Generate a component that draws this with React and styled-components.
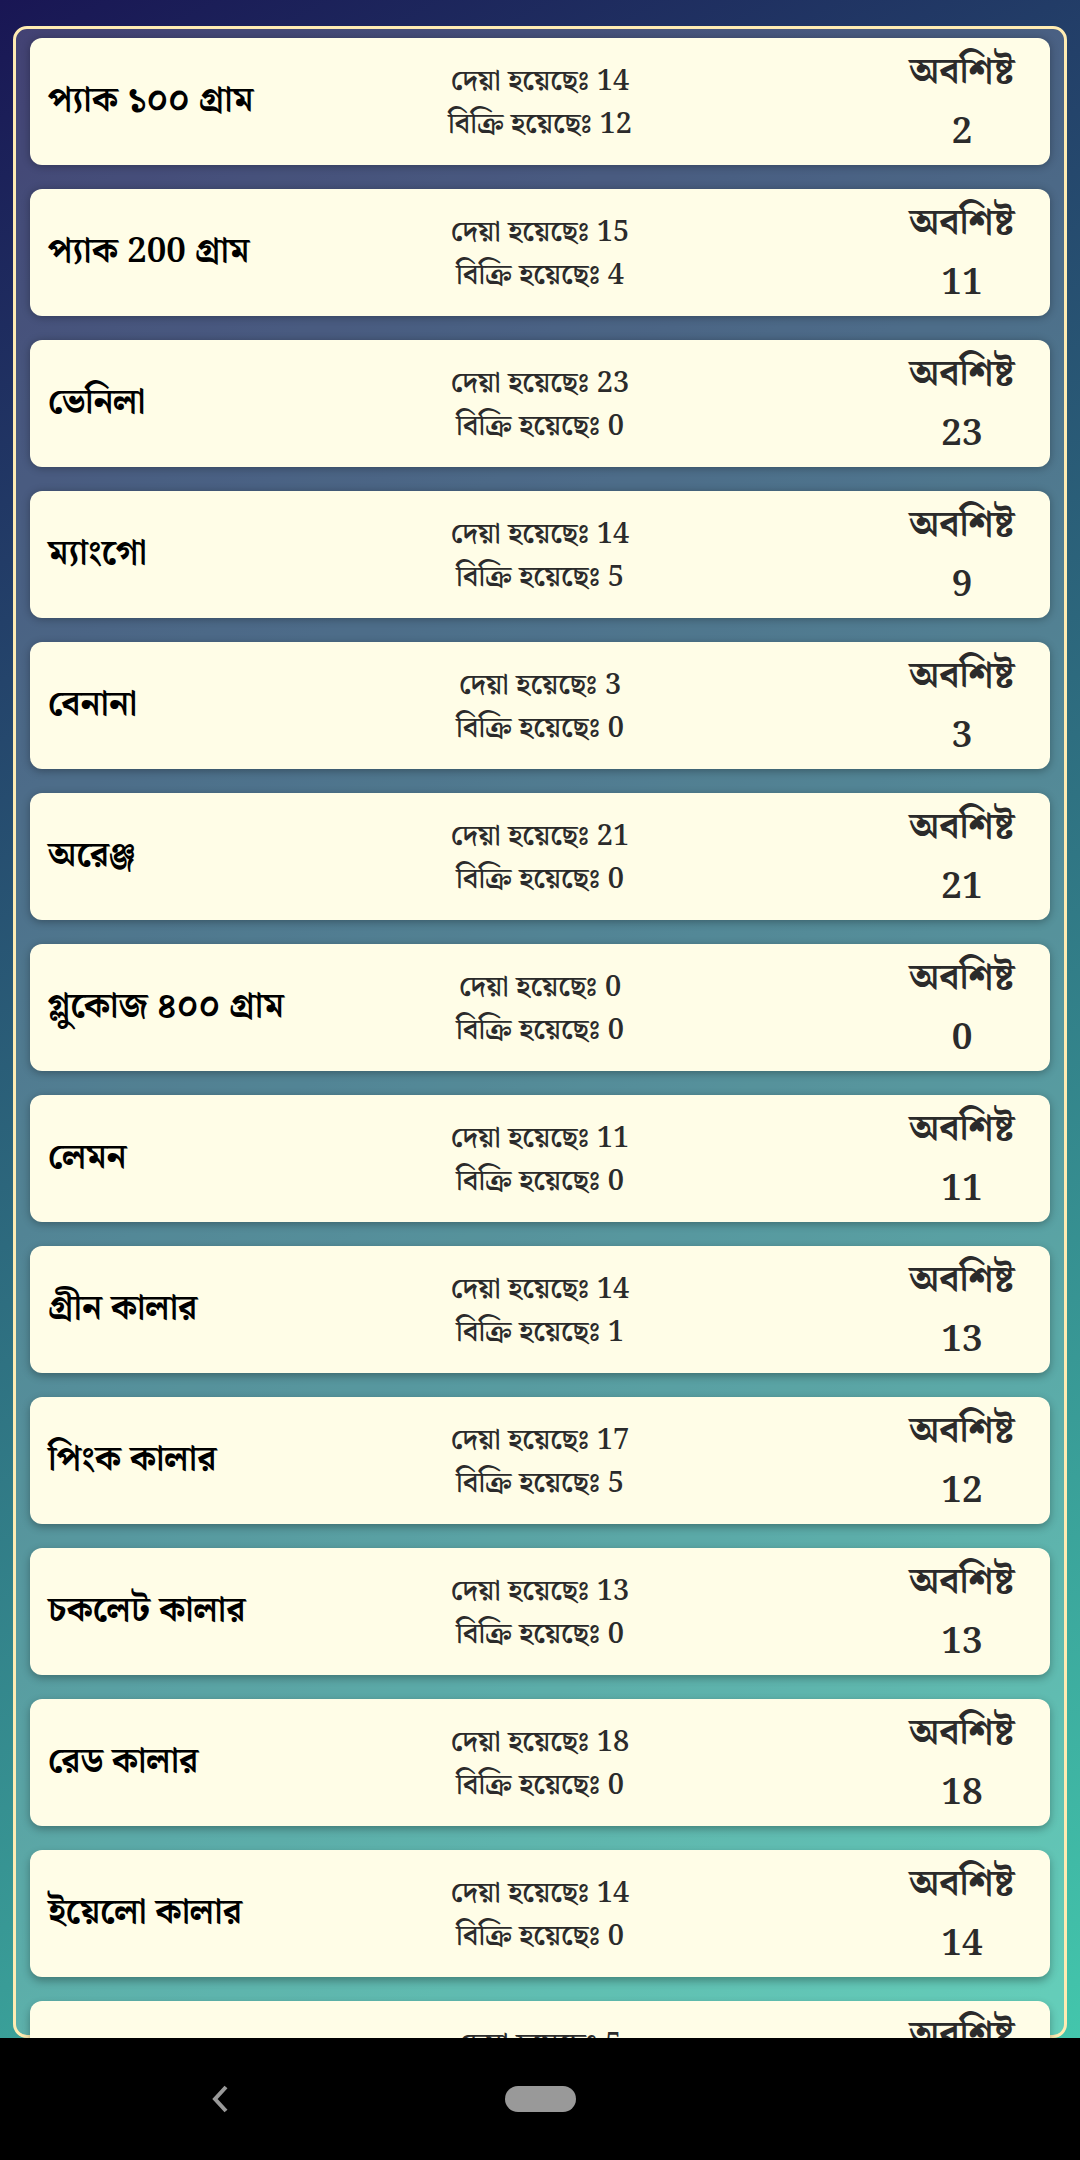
import React from "react";
import styled, { createGlobalStyle } from "styled-components";

const GlobalStyle = createGlobalStyle`
  * { box-sizing: border-box; }
  body {
    margin: 0;
    background: #000;
    font-family: "Noto Serif Bengali", "Noto Serif", "Liberation Serif", "Noto Sans Bengali", serif;
  }
`;

const Shell = styled.div`
  height: 100vh;
  display: flex;
  flex-direction: column;
`;

const Screen = styled.main`
  flex: 1;
  min-height: 0;
  overflow: hidden;
  padding: 26px 13px 0;
  background: linear-gradient(152deg, #191654, #43c6ac);
`;

const Frame = styled.section`
  height: 100%;
  padding: 9px 14px;
  border: 3px solid #ffecb3;
  border-radius: 14px;
  background: rgba(255, 255, 255, 0.18);
`;

const List = styled.ul`
  list-style: none;
  margin: 0;
  padding: 0;
  display: flex;
  flex-direction: column;
  gap: 24px;
`;

const Card = styled.li`
  display: grid;
  grid-template-columns: 1fr auto 1fr;
  align-items: start;
  min-height: 127px;
  padding: 0 18px;
  border-radius: 12px;
  background: #fffde7;
  color: #2b2b2b;
  box-shadow: 0 ${(p) => p.$lift}px 8px rgba(0, 0, 0, 0.3);
`;

const Name = styled.h2`
  grid-column: 1;
  margin: 0;
  padding-top: 37px;
  color: #000;
  font-size: 35px;
  line-height: 52px;
  font-weight: 700;
`;

const Counts = styled.div`
  grid-column: 2;
  padding-top: 22px;
  text-align: center;
  font-size: 29px;
  line-height: 43px;
  font-weight: 600;
`;

const Count = styled.div`
  white-space: nowrap;
`;

const Remaining = styled.div`
  grid-column: 3;
  justify-self: end;
  min-width: 140px;
  padding-top: 5px;
  text-align: center;
  font-size: 37px;
  line-height: 60px;
  font-weight: 700;
`;

const NavBar = styled.nav`
  flex: none;
  height: 122px;
  display: grid;
  grid-template-columns: 1fr auto 1fr;
  gap: 64px;
  align-items: center;
  background: #000;
`;

const NavButton = styled.button`
  justify-self: center;
  display: flex;
  padding: 0;
  border: 0;
  background: none;
`;

const HomeButton = styled(NavButton)`
  width: 71px;
  height: 26px;
  border-radius: 13px;
  background: #999;
`;

const items = [
  { name: "প্যাক ১০০ গ্রাম", given: 14, sold: 12, left: 2 },
  { name: "প্যাক 200 গ্রাম", given: 15, sold: 4, left: 11 },
  { name: "ভেনিলা", given: 23, sold: 0, left: 23 },
  { name: "ম্যাংগো", given: 14, sold: 5, left: 9 },
  { name: "বেনানা", given: 3, sold: 0, left: 3 },
  { name: "অরেঞ্জ", given: 21, sold: 0, left: 21 },
  { name: "গ্লুকোজ ৪০০ গ্রাম", given: 0, sold: 0, left: 0 },
  { name: "লেমন", given: 11, sold: 0, left: 11 },
  { name: "গ্রীন কালার", given: 14, sold: 1, left: 13 },
  { name: "পিংক কালার", given: 17, sold: 5, left: 12 },
  { name: "চকলেট কালার", given: 13, sold: 0, left: 13 },
  { name: "রেড কালার", given: 18, sold: 0, left: 18 },
  { name: "ইয়েলো কালার", given: 14, sold: 0, left: 14 },
  { given: 5 },
];

export default function App() {
  return (
    <Shell>
      <GlobalStyle />
      <Screen>
        <Frame>
          <List>
            {items.map((item, i) => (
              <Card key={i} $lift={1 + Math.floor(i / 4)}>
                {item.name && <Name>{item.name}</Name>}
                <Counts>
                  <Count>দেয়া হয়েছেঃ {item.given}</Count>
                  {item.sold !== undefined && <Count>বিক্রি হয়েছেঃ {item.sold}</Count>}
                </Counts>
                <Remaining>
                  <div>অবশিষ্ট</div>
                  {item.left !== undefined && <div>{item.left}</div>}
                </Remaining>
              </Card>
            ))}
          </List>
        </Frame>
      </Screen>
      <NavBar>
        <NavButton aria-label="Back">
          <svg width="18" height="28" viewBox="0 0 18 28" fill="none" stroke="#999" strokeWidth="4">
            <path d="M15 2 L4 14 L15 26" />
          </svg>
        </NavButton>
        <HomeButton aria-label="Home" />
      </NavBar>
    </Shell>
  );
}
